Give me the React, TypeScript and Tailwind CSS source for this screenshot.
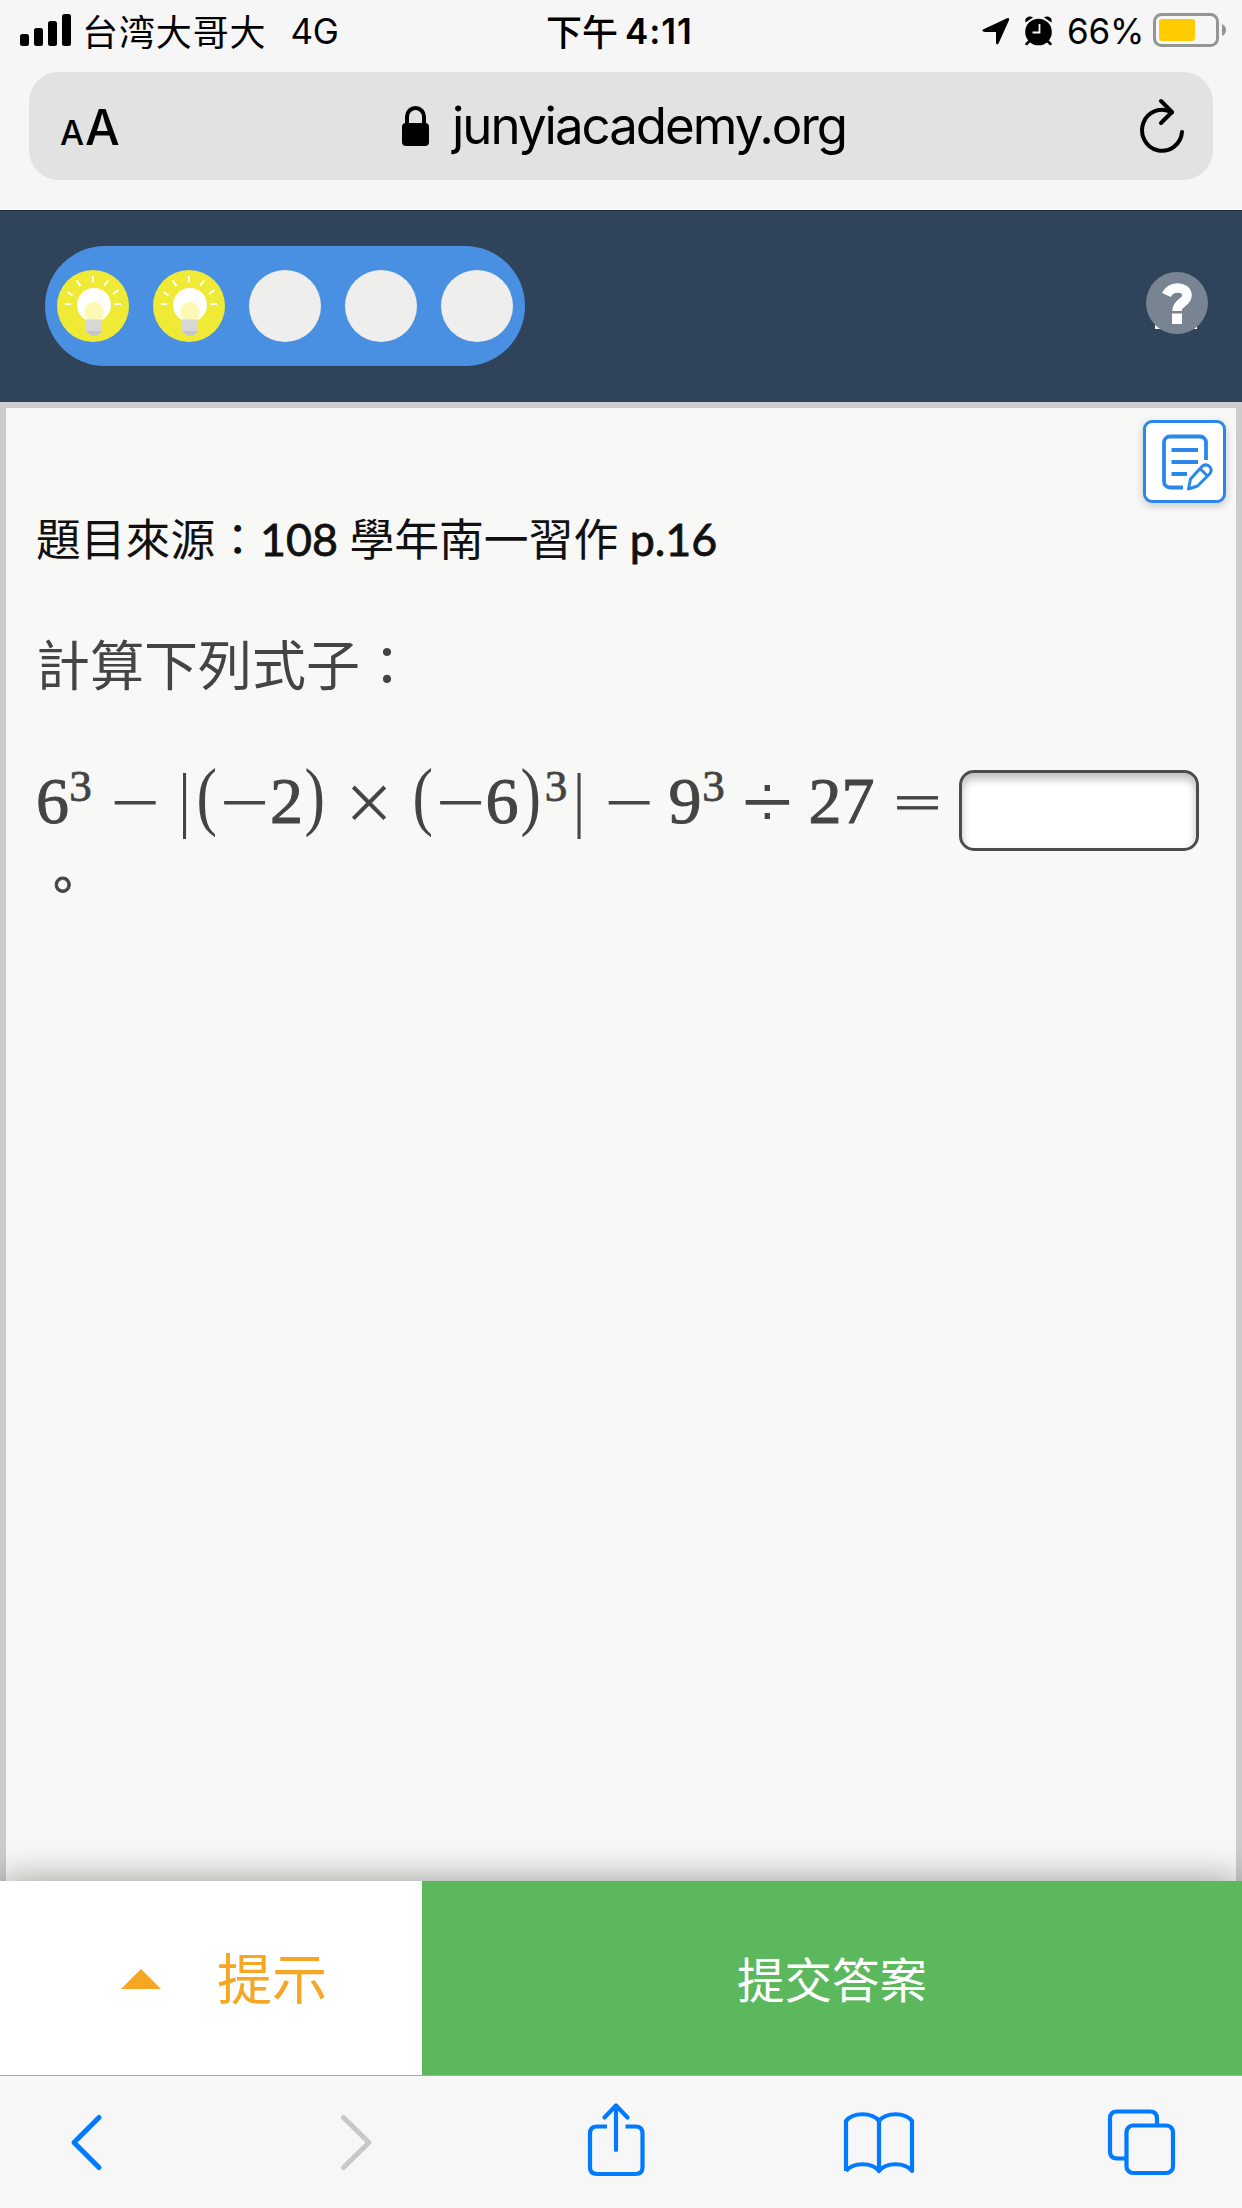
import React from "react";

const CJK = "font-['Inter','Noto_Sans_CJK_TC',sans-serif]";

function StatusBar() {
  return (
    <div className="relative flex h-[72px] items-start text-[35px] leading-[62px] text-black">
      <svg className="ml-5 mt-3.5 h-8 w-[51px] shrink-0" viewBox="0 0 51 32">
        <rect x="0" y="20" width="9" height="12" rx="2.5" />
        <rect x="14" y="14" width="9" height="18" rx="2.5" />
        <rect x="28" y="7" width="9" height="25" rx="2.5" />
        <rect x="42" y="0" width="9" height="32" rx="2.5" />
      </svg>
      <span className="-mt-px ml-[11px] font-['Noto_Sans_CJK_SC',sans-serif] text-[36px] tracking-[0.9px]">台湾大哥大</span>
      <span className="ml-[24px] tracking-[-0.3px]">4G</span>
      <div className="absolute left-[546px] top-0 flex items-start">
        <span className="-mt-px font-['Noto_Sans_CJK_TC',sans-serif] text-[36px] font-medium">下午</span>
        <span className="ml-[7px] font-semibold tracking-[0.9px]">4:11</span>
      </div>
      <div className="ml-auto flex items-start">
        <svg className="mt-4 h-[30px] w-[30px]" viewBox="0 0 30 30">
          <path d="M2 13.5 26 2.2q3-1 2 2L17.500 27.500q-1.800 2-2.500-.5V16H4q-4-1-2-2.500z" />
        </svg>
        <svg className="ml-[13px] mt-[15px] h-8 w-[30px]" viewBox="0 0 30 32">
          <circle cx="14.500" cy="17" r="13.300" />
          <path d="M1.500 7.500C0 2 6 0 9 2.500zM27.500 7.500C29 2 23 0 20 2.500z" />
          <path d="m5.500 26-3 3M23.500 26l3 3" stroke="#000" strokeWidth="2.500" strokeLinecap="round" />
          <path d="M15.500 9v8.500h-7" fill="none" stroke="#f6f6f6" strokeWidth="1.800" />
        </svg>
        <span className="ml-[13px] w-[79px] whitespace-nowrap tracking-[-0.2px]">66%</span>
        <svg className="ml-[7px] mr-[15px] mt-[13px] h-[34px] w-[74px]" viewBox="0 0 74 34">
          <rect x="1.500" y="1.500" width="63" height="31" rx="7" fill="none" stroke="#949494" strokeWidth="3" />
          <rect x="6" y="6" width="36" height="22" rx="3" fill="#fc0" />
          <path d="M69 11q4 2 4 6t-4 6z" fill="#949494" />
        </svg>
      </div>
    </div>
  );
}

function AddressBar() {
  return (
    <div className="relative mx-[29px] flex h-[108px] items-center rounded-[30px] bg-[#e2e2e2] text-black">
      <div className="ml-[31px] mt-1 flex items-baseline gap-px">
        <span className="text-[34px] font-medium">A</span>
        <span className="text-[49px] font-medium">A</span>
      </div>
      <div className="absolute left-[372px] top-0 flex h-full items-center">
        <svg className="mt-[-1px] h-10 w-7" viewBox="0 0 28 40">
          <rect x="1" y="17" width="27" height="23" rx="4" />
          <path d="M6 18v-7.500a8.500 8.500 0 0 1 17 0V18" fill="none" stroke="#000" strokeWidth="4" />
        </svg>
        <span className="ml-[23px] whitespace-nowrap text-[51px] leading-[60px] tracking-[-2px]">junyiacademy.org</span>
      </div>
      <svg className="absolute left-[1109px] top-[26px] h-[56px] w-[48px]" viewBox="0 0 48 56" fill="none" stroke="#000" strokeWidth="4" strokeLinecap="round" strokeLinejoin="round">
        <path d="M34 14.500A20 20.500 0 1 0 44 34" />
        <path d="m23 3 11 11-11 11" />
      </svg>
    </div>
  );
}

function Bulb() {
  return (
    <svg className="size-[72px]" viewBox="0 0 72 72">
      <circle cx="36" cy="36" r="36" fill="#efea36" />
      <path d="M36 6v6.500M19.500 10.500l4 5.500M51 10.500 47 16M10.500 22l5 3.500M61.500 20 56 24M8 34h6.500M57.500 34H64" stroke="#fff" strokeWidth="2" />
      <circle cx="37" cy="35" r="17" fill="#fff" />
      <circle cx="37" cy="42" r="10" fill="#fdf9b5" />
      <path d="M29 49.500h16V62l-5 4h-6l-5-4z" fill="#d7d7d7" />
      <path d="M29 61h16l-5 4.500h-6z" fill="#c5c5c5" />
    </svg>
  );
}

function ProgressHeader() {
  return (
    <div className="flex h-48 items-center justify-between bg-[#2f435a] pl-[45px] pr-[34px] shadow-[inset_0_1px_0_#22303f]">
      <div className="flex h-[120px] w-[480px] items-center justify-between rounded-full bg-[#4990e2] px-3">
        <Bulb />
        <Bulb />
        <div className="size-[72px] rounded-full bg-[#eeeeec]" />
        <div className="size-[72px] rounded-full bg-[#eeeeec]" />
        <div className="size-[72px] rounded-full bg-[#eeeeec]" />
      </div>
      <svg className="-mt-1.5 size-[62px]" viewBox="0 0 62 62">
        <path d="M9 53h42v4H9z" fill="#fff" />
        <circle cx="31" cy="31" r="31" fill="#788491" />
        <path d="M20.500 23C25 13 41 14 41 23.500 41 31 31 30 31 39" fill="none" stroke="#fff" strokeWidth="9.500" />
        <path d="M26 41.500h10V52H26z" fill="#fff" />
      </svg>
    </div>
  );
}

const digit = "text-[66px] translate-y-[-1px] [-webkit-text-stroke:1px_#444]";
const sup = "text-[45px] -translate-y-[23px] [-webkit-text-stroke:0.8px_#444]";
const op = "font-['DejaVu_Sans'] font-extralight text-[64px] -translate-y-px [-webkit-text-stroke:0.8px_#444]";
const divide = "font-['DejaVu_Sans'] font-extralight text-[66px] -translate-y-px [-webkit-text-stroke:2px_#444]";
const paren = "text-[77px] -translate-y-[3px] scale-x-[0.8]";
const bar = "font-['DejaVu_Sans'] font-extralight text-[65px] -translate-y-px";

const formula: [string, string, string][] = [
  ["6", "w-[33px]", digit],
  ["3", "w-[23px]", sup],
  ["−", "w-[86px]", op],
  ["|", "w-[13px]", bar],
  ["(", "w-[32px]", paren],
  ["−", "w-[43px]", op],
  ["2", "w-[41px]", digit],
  [")", "w-[16px]", paren],
  ["×", "w-[92px]", op],
  ["(", "w-[16px]", paren],
  ["−", "w-[59px]", op],
  ["6", "w-[24px]", digit],
  [")", "w-[34px]", paren],
  ["3", "w-[16px]", sup],
  ["|", "w-[30px]", bar],
  ["−", "w-[70px]", op],
  ["9", "w-[42px]", digit],
  ["3", "w-[15px]", sup],
  ["÷", "w-[93px]", divide],
  ["27", "w-[55px]", digit],
  ["=", "w-[97px]", op],
];

function Question() {
  return (
    <main className="relative h-[1479px] border-x-[6px] border-t-[6px] border-[#ccc] bg-[#f8f8f6] pl-[30px] font-['Lato','Noto_Sans_CJK_TC',sans-serif]">
      <button className="absolute right-[10px] top-3 flex size-[83px] items-center justify-center rounded-[9px] border-[3px] border-[#2a88ec] bg-white shadow-[0_3px_8px_rgba(0,0,0,0.2)]">
        <svg className="ml-[3px] mt-[5px] size-[60px] shrink-0" viewBox="0 0 60 60" fill="none" stroke="#2a88ec" strokeWidth="3.800">
          <path d="M27 53.500H14a6 6 0 0 1-6-6v-39a6 6 0 0 1 6-6h30a6 6 0 0 1 6 6V26M15.500 16H42M15.500 28H42M15.500 40H31" />
          <path d="m32.500 55 2-10L46.500 32q4-2.500 7 .5t.5 7L41.500 52zM44 34.500l6.500 6.500" strokeWidth="3" strokeLinejoin="round" />
        </svg>
      </button>
      <p className="pt-[99px] text-[44.800px] leading-[64px] text-[#111]">
        題目來源：
        <span className="[-webkit-text-stroke:0.8px_#111]">108</span> 學年南一習作 <span className="[-webkit-text-stroke:0.8px_#111]">p.16</span>
      </p>
      <p className="mt-[55px] text-[54px] leading-[80px] text-[#444]">計算下列式子：</p>
      <div className="mt-[53px] flex h-[81px] text-[#444]">
        <div className="-mt-px flex items-baseline leading-[80px] font-['Liberation_Serif',serif]">
          {formula.map(([text, width, style], i) => (
            <span key={i} className={`${width} flex justify-center`}>
              <span className={style}>{text}</span>
            </span>
          ))}
        </div>
        <input className="-ml-[7px] mt-[11px] h-[81px] w-[240px] shrink-0 rounded-[15px] border-[3px] border-[#4c4c4c] bg-white shadow-[inset_0_6px_8px_rgba(0,0,0,0.25)]" />
      </div>
      <p className="ml-[17px] text-[50px] leading-[54px] text-[#444] [-webkit-text-stroke:0.8px_#444] font-['Noto_Sans_CJK_SC']">。</p>
    </main>
  );
}

function ActionBar() {
  return (
    <div className="relative z-10 flex h-[194px] shadow-[0_0_36px_rgba(0,0,0,0.4)]">
      <button className="flex w-[422px] items-center bg-white text-[55px] text-[#f6a623]">
        <svg className="ml-[121px] mt-0.5 h-5 w-10" viewBox="0 0 40 20" fill="currentColor">
          <path d="M20 0 40 20H0z" />
        </svg>
        <span className="ml-[56px] pt-[3px]">提示</span>
      </button>
      <button className="flex flex-1 items-center justify-center bg-[#5cb85c] pt-1.5 text-[47.500px] text-white">提交答案</button>
    </div>
  );
}

function Toolbar() {
  return (
    <nav className="relative z-20 flex h-[133px] items-start border-t border-[#aaa] bg-[#f7f7f7] pt-[26px]">
      <svg className="ml-[70px] h-20 w-[34px]" viewBox="70 2102 34 80" fill="none" stroke="#007aff" strokeWidth="5" strokeLinecap="round" strokeLinejoin="round">
        <path d="m99 2117.500-25 25 25 25" />
      </svg>
      <svg className="ml-[235px] h-20 w-[34px]" viewBox="339 2102 34 80" fill="none" stroke="#c8c8c8" strokeWidth="5" strokeLinecap="round" strokeLinejoin="round">
        <path d="m343.500 2117.500 25.500 25-25.500 25" />
      </svg>
      <svg className="ml-[213px] h-20 w-[60px]" viewBox="586 2102 60 80" fill="none" stroke="#007aff" strokeWidth="4.200">
        <path d="M607 2126.500h-10q-7 0-7 7v34q0 6.500 7 6.500h38.500q7 0 7-6.500v-34q0-7-7-7h-10" />
        <path d="M616 2150v-43M604.500 2117.500l11.500-12 11.500 12" strokeLinecap="round" strokeLinejoin="round" />
      </svg>
      <svg className="ml-[196px] h-20 w-[74px]" viewBox="842 2102 74 80" fill="none" stroke="#007aff" strokeWidth="4.200" strokeLinejoin="round">
        <path d="M846 2171v-50c7-9 26-9 33 0 7-9 26-9 33 0v50c-7-9-26-9-33 0-7-9-26-9-33 0M879 2121v50" />
      </svg>
      <svg className="ml-[190px] h-20 w-[72px]" viewBox="1106 2102 72 80" fill="none" stroke="#007aff" strokeWidth="4.200">
        <path d="M1125 2158.500h-8q-7 0-7-7v-33q0-7 7-7h33q7 0 7 7v7" />
        <rect x="1126.500" y="2125.500" width="46.500" height="47.500" rx="6.500" />
      </svg>
    </nav>
  );
}

export default function App() {
  return (
    <div className={`${CJK} flex h-[2208px] w-[1242px] flex-col overflow-hidden bg-[#f7f7f7]`}>
      <header className="h-[210px] shrink-0 bg-[#f6f6f6]">
        <StatusBar />
        <AddressBar />
      </header>
      <ProgressHeader />
      <Question />
      <ActionBar />
      <Toolbar />
    </div>
  );
}
